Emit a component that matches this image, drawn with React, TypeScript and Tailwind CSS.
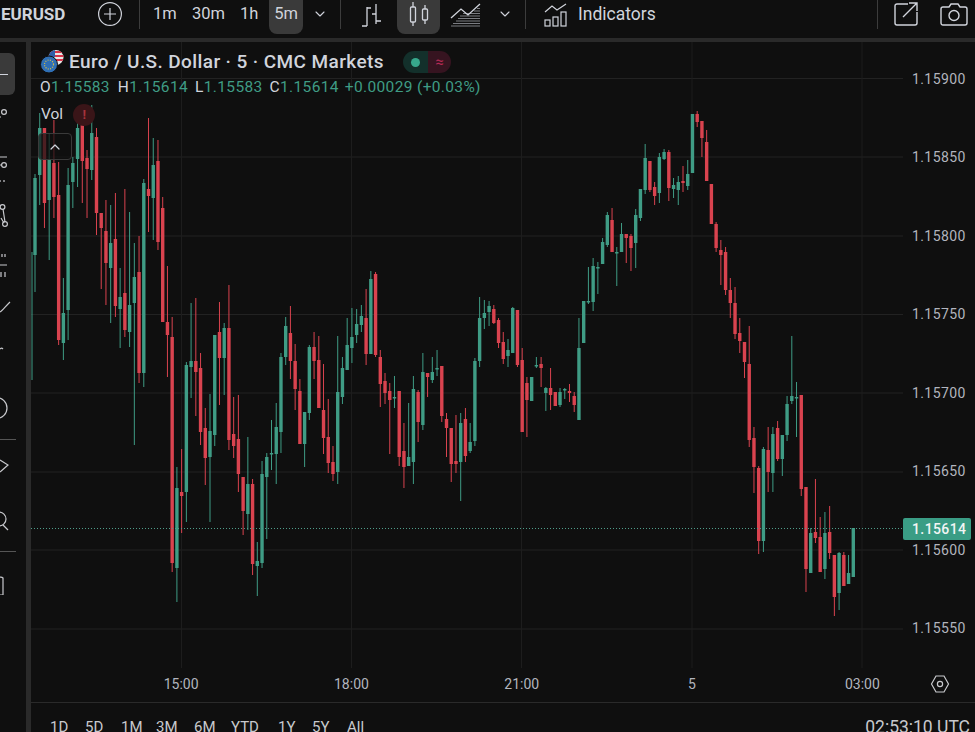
import { ChevronDown, ChevronUp } from "lucide-react";

type Candle = [string, number, number, number, number];

// top, bottom, high, low are page y of each 5m candle
const candles: Candle[] = [
  ["g",178,255,174,292],["g",128,175,113,205],["r",128,203,128,228],["g",160,200,133,260],["r",163,197,120,218],
  ["r",195,340,162,345],["g",313,343,278,360],["g",185,310,168,340],["g",163,182,157,208],["g",128,159,117,187],
  ["r",120,161,118,203],["r",158,169,150,218],["g",133,170,105,180],["r",137,213,128,235],["r",213,228,213,289],
  ["r",231,263,200,305],["g",243,268,205,323],["r",239,306,193,317],["g",297,309,268,348],["r",293,330,189,337],
  ["g",305,332,212,347],["g",277,303,243,445],["r",272,373,236,383],["g",183,373,179,387],["r",189,196,118,232],
  ["g",165,198,138,240],["r",161,242,140,250],["r",208,322,197,322],["r",322,335,266,377],["r",337,563,317,572],
  ["g",488,568,467,602],["r",492,496,449,533],["g",365,492,362,522],["g",361,367,303,398],["r",361,372,298,416],
  ["r",368,432,353,445],["r",428,458,408,485],["g",431,457,394,522],["g",335,435,335,446],["r",332,358,302,405],
  ["g",328,358,323,395],["r",328,440,285,450],["r",434,446,397,458],["r",439,474,395,492],["r",477,511,477,535],
  ["g",484,514,437,530],["r",484,564,479,575],["g",561,566,542,596],["g",474,563,461,568],["g",457,477,453,539],
  ["g",453,454,420,470],["g",427,454,403,484],["g",357,432,353,453],["g",326,357,317,365],["r",333,361,306,379],
  ["r",361,389,344,410],["r",391,444,379,444],["g",412,444,412,467],["g",347,413,345,420],["r",347,361,332,379],
  ["r",360,408,336,408],["r",410,438,364,454],["r",437,463,399,473],["r",462,474,446,481],["g",392,472,336,484],
  ["g",368,397,357,404],["g",345,370,318,370],["g",337,348,308,363],["g",324,335,309,343],["g",316,325,305,332],
  ["r",318,354,289,365],["g",279,354,271,354],["r",274,355,272,357],["r",357,384,350,407],["r",381,393,373,404],
  ["r",391,400,383,454],["g",397,398,376,408],["r",391,457,391,466],["r",451,467,423,488],["g",457,466,403,466],
  ["g",389,462,376,484],["r",392,422,390,442],["g",372,425,353,430],["r",373,377,373,397],["g",372,380,357,383],
  ["g",368,369,350,376],["r",366,416,366,422],["r",419,428,413,457],["r",428,464,428,482],["r",461,464,415,473],
  ["g",423,462,413,501],["r",419,456,408,462],["g",442,451,423,453],["g",361,441,358,446],["g",318,361,297,367],
  ["g",313,318,300,329],["g",306,312,301,326],["r",309,323,305,324],["r",320,343,318,348],["r",342,359,332,364],
  ["g",350,356,339,367],["g",308,353,307,353],["r",310,365,310,367],["r",360,432,348,432],["r",383,400,377,437],
  ["g",377,401,377,401],["g",365,366,357,368],["r",364,368,357,387],["g",388,393,387,411],["r",388,395,368,410],
  ["r",392,406,392,406],["g",392,405,388,407],["g",389,390,388,399],["r",391,393,384,402],["r",396,405,392,412],
  ["g",348,420,318,420],["g",301,343,301,343],["g",301,302,267,304],["g",266,302,258,311],["g",267,268,262,294],
  ["g",242,264,238,264],["g",215,245,212,247],["r",220,252,208,252],["g",252,253,247,286],["g",234,252,223,252],
  ["r",234,238,234,263],["r",236,248,234,271],["g",215,243,209,268],["g",189,218,189,221],["g",158,190,144,194],
  ["r",161,190,161,192],["r",187,196,182,205],["g",157,193,153,203],["g",152,159,149,160],["r",152,188,150,201],
  ["g",185,189,178,198],["g",182,190,176,205],["r",181,183,166,192],["g",174,186,160,190],["g",114,173,114,173],
  ["r",114,122,111,127],["r",121,138,121,157],["r",142,181,130,181],["r",184,224,184,224],["r",224,248,222,252],
  ["r",250,255,240,285],["r",252,290,247,295],["r",290,303,278,318],["r",303,334,287,339],["r",333,341,318,353],
  ["r",342,362,342,378],["r",364,440,326,447],["r",438,467,427,493],["r",468,541,466,554],["g",449,541,447,552],
  ["r",450,472,427,492],["g",434,473,427,492],["r",428,459,421,461],["g",435,459,435,476],["g",404,435,396,441],
  ["g",396,401,336,404],["g",397,398,382,437],["r",395,489,395,496],["r",487,569,487,592],["g",533,573,528,573],
  ["r",532,538,479,543],["r",537,572,517,572],["g",533,569,512,579],["r",532,553,506,559],["r",555,597,555,616],
  ["g",553,593,552,610],["r",555,586,552,586],["g",573,584,555,584],["g",528,577,528,577],
];

const GREEN = "#3f9c85";
const RED = "#d9434f";
const priceLines = [78.5, 157, 236, 314.5, 393, 472, 550, 629];
const timeLines = [181.5, 351.5, 521.5, 692, 862];
const prices = ["1.15900", "1.15850", "1.15800", "1.15750", "1.15700", "1.15650", "1.15600", "1.15550"];
const times = ["15:00", "18:00", "21:00", "5", "03:00"];
const ranges = [
  ["1D", "w-[35px]"], ["5D", "w-[36px]"], ["1M", "w-[35px]"], ["3M", "w-[38px]"], ["6M", "w-[37px]"],
  ["YTD", "w-[47px]"], ["1Y", "w-[34px]"], ["5Y", "w-[35px]"], ["All", "w-[30px]"],
];

function Chart() {
  return (
    <svg className="h-full w-full" viewBox="31 42 872 626" preserveAspectRatio="none">
      {priceLines.map((y) => (
        <line key={y} x1="31" x2="903" y1={y} y2={y} stroke="#222222" strokeWidth="1" />
      ))}
      {timeLines.map((x) => (
        <line key={x} x1={x} x2={x} y1="42" y2="668" stroke="#1d1d1d" strokeWidth="1" />
      ))}
      <line x1="32" x2="32" y1="252" y2="380" stroke={GREEN} strokeWidth="1" />
      {candles.map(([c, top, bottom, high, low], i) => {
        const x = 35 + i * 4.73;
        const color = c === "g" ? GREEN : RED;
        return (
          <g key={i}>
            <line x1={x} x2={x} y1={high} y2={low} stroke={color} strokeWidth="1" />
            <rect x={x - 1.7} y={top} width="3.4" height={Math.max(bottom - top, 1.5)} fill={color} />
          </g>
        );
      })}
      <line x1="31" x2="903" y1="528.5" y2="528.5" stroke="#4f9d8a" strokeWidth="1" strokeDasharray="1 2" />
    </svg>
  );
}

function Flag() {
  return (
    <svg width="26" height="26" viewBox="0 0 26 26">
      <clipPath id="us"><circle cx="17" cy="8.5" r="7.5" /></clipPath>
      <g clipPath="url(#us)">
        <rect x="9" y="1" width="16" height="15" fill="#e8e8e8" />
        <rect x="9" y="2" width="16" height="2" fill="#d8344a" />
        <rect x="9" y="6" width="16" height="2" fill="#d8344a" />
        <rect x="9" y="10" width="16" height="2" fill="#d8344a" />
        <rect x="9" y="1" width="7" height="7" fill="#2f5ea8" />
      </g>
      <circle cx="10" cy="15.5" r="8.5" fill="#2f6fb5" stroke="#0f0f0f" strokeWidth="1" />
      <circle cx="10" cy="15.5" r="4.5" fill="none" stroke="#e0c040" strokeWidth="1.2" strokeDasharray="1 1.4" />
    </svg>
  );
}

function PlusCircle() {
  return (
    <svg width="26" height="26" viewBox="0 0 26 26" fill="none" stroke="#d1d4dc" strokeWidth="1.2">
      <circle cx="13" cy="13" r="11.4" />
      <path d="M13 7v12M7 13h12" />
    </svg>
  );
}

function BarsIcon() {
  return (
    <svg width="22" height="24" viewBox="0 0 22 24" fill="none" stroke="#d1d4dc" strokeWidth="1.3">
      <path d="M6 4v19M1 23h5M6 5h4" />
      <path d="M15 1v20M11 11h4M15 18h5" />
    </svg>
  );
}

function CandleIcon() {
  return (
    <svg width="20" height="26" viewBox="0 0 20 26" fill="none" stroke="#d1d4dc" strokeWidth="1.3">
      <rect x="1.5" y="6" width="5" height="15" rx="1" />
      <path d="M4 1v5M4 21v4" />
      <rect x="13.5" y="8" width="5" height="11" rx="1" />
      <path d="M16 4v4M16 19v4" />
    </svg>
  );
}

function AreaIcon() {
  return (
    <svg width="31" height="24" viewBox="0 0 31 24" fill="none" stroke="#d1d4dc">
      <path strokeWidth="1.3" d="M1 15 11 6l7 6L30 1" />
      <path strokeWidth="0.8" d="M1 23h29M3 20.500h27M6 18h24M8 15.500h22M10 13h20M13 10.500h17M24 8h6M27 5.500h3" opacity="0.7" />
    </svg>
  );
}

function IndicatorsIcon() {
  return (
    <svg width="24" height="24" viewBox="0 0 24 24" fill="none" stroke="#d1d4dc" strokeWidth="1.2">
      <path d="M1 9 8 3l5 4 9-6" />
      <rect x="1" y="17" width="5" height="6" />
      <rect x="9" y="14" width="5" height="9" />
      <rect x="17" y="9" width="5" height="14" />
    </svg>
  );
}

function ShareIcon() {
  return (
    <svg width="25" height="24" viewBox="0 0 25 24" fill="none" stroke="#d1d4dc" strokeWidth="1.4">
      <path d="M14 2H3a2 2 0 0 0-2 2v17a2 2 0 0 0 2 2h18a2 2 0 0 0 2-2V10" />
      <path d="M9 15 23 1M15 1h8v8" />
    </svg>
  );
}

function CameraIcon() {
  return (
    <svg width="28" height="23" viewBox="0 0 28 23" fill="none" stroke="#d1d4dc" strokeWidth="1.4">
      <path d="M9 4l2-3h7l2 3h5a2 2 0 0 1 2 2v14a2 2 0 0 1-2 2H3a2 2 0 0 1-2-2V6a2 2 0 0 1 2-2z" />
      <circle cx="14" cy="12.5" r="5" />
    </svg>
  );
}

function SettingsHex() {
  return (
    <svg width="20" height="20" viewBox="0 0 20 20" fill="none" stroke="#c8c9cd" strokeWidth="1.2">
      <path d="M6 2h8l4.500 8-4.500 8H6L1.500 10z" />
      <circle cx="10" cy="10" r="2.6" />
    </svg>
  );
}

function Sep({ className }: { className: string }) {
  return <div className={`h-[29px] w-[1px] bg-[#3c3c3c] ${className}`} />;
}

function TopBar() {
  return (
    <div className="flex h-[38px] items-start bg-[#0f0f0f] text-[#d1d4dc]">
      <span className="ml-[1px] mt-[4px] w-[96px] text-[17px] font-bold leading-[20px]">EURUSD</span>
      <div className="mt-[1px]"><PlusCircle /></div>
      <Sep className="ml-[16px]" />
      <span className="ml-[13px] mt-[4px] w-[39px] text-[16.5px] leading-[20px]">1m</span>
      <span className="mt-[4px] w-[48px] text-[16.5px] leading-[20px]">30m</span>
      <span className="mt-[4px] w-[29px] text-[16.5px] leading-[20px]">1h</span>
      <div className="flex h-[34px] w-[34px] items-start justify-center rounded-b-lg bg-[#3a3a3a] pt-[4px]">
        <span className="text-[16.5px] leading-[20px]">5m</span>
      </div>
      <ChevronDown className="ml-[9px] mt-[6px]" size={16} strokeWidth={1.6} />
      <Sep className="ml-[12px]" />
      <div className="ml-[20px] mt-[3px]"><BarsIcon /></div>
      <div className="ml-[14px] flex h-[34px] w-[43px] items-start justify-center rounded-b-lg bg-[#3a3a3a] pt-[1px]">
        <CandleIcon />
      </div>
      <div className="ml-[10px] mt-[3px]"><AreaIcon /></div>
      <ChevronDown className="ml-[16px] mt-[6px]" size={16} strokeWidth={1.6} />
      <Sep className="ml-[12px]" />
      <div className="ml-[18px] mt-[3px]"><IndicatorsIcon /></div>
      <span className="ml-[10px] mt-[4px] w-[299px] text-[17.5px] leading-[20px]">Indicators</span>
      <Sep className="" />
      <div className="ml-[16px] mt-[2px]"><ShareIcon /></div>
      <div className="ml-[21px] mt-[3px]"><CameraIcon /></div>
    </div>
  );
}

function LeftToolbar() {
  return (
    <div className="flex w-[26px] shrink-0 flex-col items-start overflow-hidden bg-[#0f0f0f] pt-[11px]">
      <div className="flex h-[42px] w-[15px] items-center rounded-r-[6px] bg-[#3a3a3a]">
        <div className="h-[1px] w-[8px] bg-[#d1d4dc]" />
      </div>
      <svg className="shrink-0" width="20" height="500" viewBox="0 95 20 500" fill="none" stroke="#c8c9cd" strokeWidth="1.2">
        <circle cx="4" cy="112" r="2.4" />
        <path d="M-2 117h3" />
        <path d="M0 157h7M-1 165h2" />
        <circle cx="4" cy="165" r="2.4" />
        <path d="M0 180v2M4 180v2" />
        <circle cx="2.5" cy="207" r="2.4" />
        <circle cx="5" cy="224" r="2.4" />
        <path d="M3 209l2 13M1 218l3 5" />
        <path d="M2 254v3M5 254v3M0 265h7M1 272v5M5 272v5" />
        <path d="M0 312c2-1 5-5 10-10" />
        <path d="M0 349c1-1 2-1 3 0" />
        <circle cx="-3.500" cy="408" r="10.500" />
        <path d="M0 460 8 465 0 472" />
        <circle cx="-1" cy="519" r="7" />
        <path d="M3 525l5 5" />
        <path d="M-2 583v-4a3 3 0 0 1 5-1v17h-5" />
        <path stroke="#555555" strokeWidth="1" d="M0 439.500h16M0 551.500h16" />
      </svg>
    </div>
  );
}

function Legend() {
  return (
    <div className="absolute left-[8px] top-[7px] text-[#d1d4dc]">
      <div className="flex h-[26px] items-center">
        <Flag />
        <span className="ml-[4px] whitespace-nowrap text-[19px] font-medium tracking-[0.4px]">Euro / U.S. Dollar · 5 · CMC Markets</span>
        <div className="ml-[19px] flex h-[22px] items-center overflow-hidden rounded-full">
          <div className="flex h-full w-[25px] items-center justify-center bg-[#13302b]">
            <div className="h-[9px] w-[9px] rounded-full bg-[#37a88c]" />
          </div>
          <div className="flex h-full w-[23px] items-center justify-center bg-[#361420] text-[15px] text-[#b42a55]">≈</div>
        </div>
      </div>
      <div className="mt-[3px] flex h-[20px] items-center whitespace-nowrap pl-[1px] text-[15.5px] tracking-[0.35px]">
        <span>O</span><span className="mr-[8px] text-[#3f9c85]">1.15583</span>
        <span>H</span><span className="mr-[7px] text-[#3f9c85]">1.15614</span>
        <span>L</span><span className="mr-[7px] text-[#3f9c85]">1.15583</span>
        <span>C</span><span className="mr-[6px] text-[#3f9c85]">1.15614</span>
        <span className="text-[#3f9c85]">+0.00029 (+0.03%)</span>
      </div>
      <div className="mt-[6px] flex h-[22px] items-center pl-[2px]">
        <span className="text-[15.5px]">Vol</span>
        <div className="ml-[10px] flex h-[22px] w-[22px] items-center justify-center rounded-full bg-[#3a1518] text-[13px] font-bold text-[#a8323c]">!</div>
      </div>
      <div className="ml-[-1px] mt-[7px] flex h-[27px] w-[34px] items-center justify-center rounded-[4px] border border-[#3a3a3a] bg-[#0f0f0f]/70">
        <ChevronUp size={16} strokeWidth={1.8} />
      </div>
    </div>
  );
}

function PriceAxis() {
  return (
    <div className="relative w-[72px] shrink-0 bg-[#0f0f0f] text-[14px] tracking-[0.4px] text-[#b2b5be]">
      <div className="mt-[-2px] pl-[9px]">
        {prices.map((p) => (
          <div key={p} className="flex h-[78.5px] items-center">{p}</div>
        ))}
      </div>
      <div className="absolute left-0 top-[476px] flex h-[22px] w-[68px] items-center rounded-[2px] bg-[#3a9d85] pl-[9px] font-medium text-[#f2f5f4]">
        1.15614
      </div>
    </div>
  );
}

function TimeAxis() {
  return (
    <div className="flex h-[34px] shrink-0 items-center pb-[2px] text-[14px] text-[#b2b5be]">
      <div className="flex w-[872px] shrink-0 pl-[65px]">
        {times.map((t) => (
          <div key={t} className="w-[170.3px] shrink-0 text-center">{t}</div>
        ))}
      </div>
      <div className="flex w-[72px] justify-center pl-[2px]">
        <SettingsHex />
      </div>
    </div>
  );
}

export default function App() {
  return (
    <div className="h-[732px] w-[975px] overflow-hidden bg-[#0f0f0f] font-[Roboto,sans-serif]">
      <TopBar />
      <div className="h-[4px] bg-[#2a2a2a]" />
      <div className="flex h-[690px]">
        <LeftToolbar />
        <div className="w-[5px] shrink-0 bg-[#2a2a2a]" />
        <div className="flex min-w-0 flex-1 flex-col">
          <div className="flex h-[626px] shrink-0">
            <div className="relative min-w-0 flex-1 overflow-hidden">
              <Chart />
              <Legend />
            </div>
            <PriceAxis />
          </div>
          <TimeAxis />
          <div className="h-[1px] shrink-0 bg-[#2a2a2a]" />
          <div className="flex h-[29px] shrink-0 items-end justify-between text-[15px] leading-[20px] text-[#c8c9cd]">
            <div className="mb-[-5px] ml-[19px] flex">
              {ranges.map(([label, width]) => (
                <span key={label} className={width}>{label}</span>
              ))}
            </div>
            <span className="mb-[-5px] mr-[5px] whitespace-nowrap text-[17.5px]">02:53:10 UTC</span>
          </div>
        </div>
      </div>
    </div>
  );
}
